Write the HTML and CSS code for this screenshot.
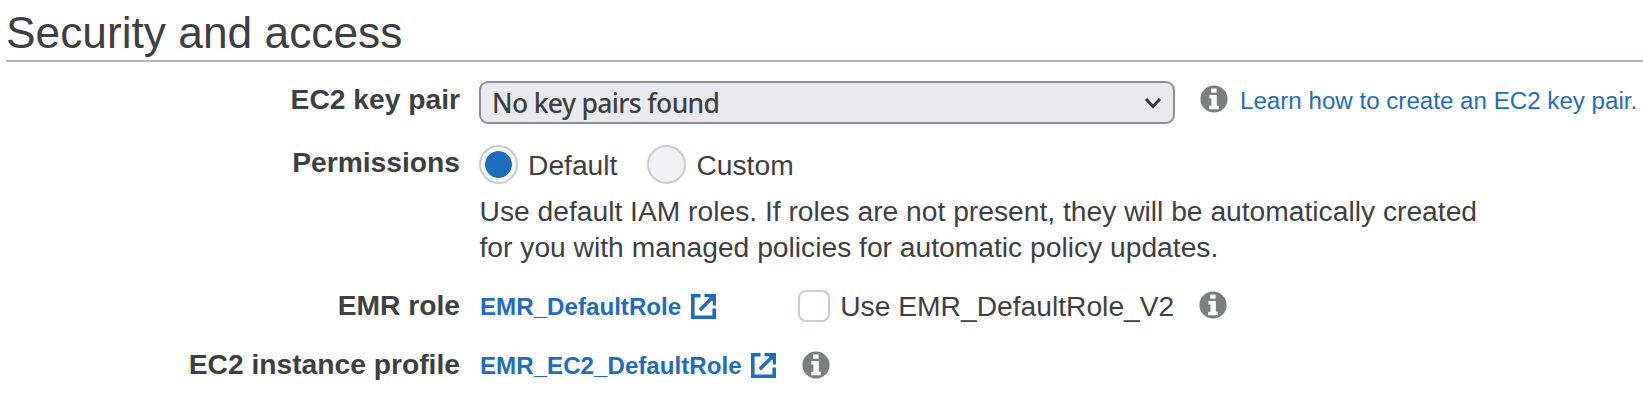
FILE: index.html
```html
<!DOCTYPE html>
<html lang="en">
<head>
<meta charset="utf-8">
<title>Security and access</title>
<link rel="stylesheet" href="styles.css">
</head>
<body>
<svg class="defs" aria-hidden="true">
  <symbol id="info" viewBox="0 0 28 28">
    <circle cx="14" cy="14" r="13.6" fill="#7c7d80"/>
    <path fill="#fff" d="M11.2 3.4h5.4v4.4h-5.4zM9.4 10h7.4v10.8h2v3.4H9.2v-3.4h2.2v-7.4h-2z"/>
  </symbol>
  <symbol id="external" viewBox="0 0 25 25">
    <path fill="none" stroke="#1f6cbf" stroke-width="3.6" d="M9.5 1.8H1.8v21.4h21.4V14.5"/>
    <path fill="none" stroke="#1f6cbf" stroke-width="3.4" d="M8.8 16.2 21 4"/>
    <path fill="#1f6cbf" d="M13.5 0H25v11.5h-3.2V7.2L17.8 3.2h-4.3z"/>
  </symbol>
</svg>
<main class="panel">
  <h1 class="title">Security and access</h1>
  <div class="row row-key">
    <span class="label">EC2 key pair</span>
    <div class="select"><span class="select-text">No key pairs found</span>
      <svg class="chevron" viewBox="0 0 18 12"><path d="M2 2l7 7.5L16 2"/></svg>
    </div>
    <svg class="info info-key"><use href="#info"/></svg>
    <a class="link learn">Learn how to create an EC2 key pair.</a>
  </div>
  <div class="row row-permissions">
    <span class="label">Permissions</span>
    <span class="radio checked"></span><span class="option">Default</span>
    <span class="radio second"></span><span class="option">Custom</span>
  </div>
  <p class="help">Use default IAM roles. If roles are not present, they will be automatically created<br>for you with managed policies for automatic policy updates.</p>
  <div class="row row-role">
    <span class="label">EMR role</span>
    <a class="link role">EMR_DefaultRole</a>
    <svg class="external"><use href="#external"/></svg>
    <span class="checkbox"></span>
    <span class="option use-v2">Use EMR_DefaultRole_V2</span>
    <svg class="info info-role"><use href="#info"/></svg>
  </div>
  <div class="row row-profile">
    <span class="label">EC2 instance profile</span>
    <a class="link role">EMR_EC2_DefaultRole</a>
    <svg class="external"><use href="#external"/></svg>
    <svg class="info info-profile"><use href="#info"/></svg>
  </div>
</main>
</body>
</html>
```
FILE: styles.css
```css
* { box-sizing: border-box; }
body {
  margin: 0;
  background: #fff;
  color: #3e3f42;
  font: 28.22px/36px "Liberation Sans", Arial, sans-serif;
  overflow: hidden;
}
.defs { display: block; width: 0; height: 0; }
.panel { height: 401px; }
.title {
  height: 62px;
  margin: 0 0 0 6px;
  padding-top: 8px;
  border-bottom: 2px solid #b0b5c0;
  font-size: 44.3px;
  line-height: 50px;
  font-weight: 400;
}
.row { display: flex; align-items: flex-start; white-space: nowrap; }
.label { width: 460px; margin-right: 19px; flex: none; text-align: right; font-weight: 700; }
.info { width: 28px; height: 28px; flex: none; }
.external { width: 25px; height: 25px; flex: none; margin-left: 10px; }
.link { color: #1f6cbf; font-size: 24.15px; }

.row-key { height: 76px; padding-top: 19px; }
.row-key .label { margin-top: 0; }
.select {
  display: flex;
  align-items: center;
  width: 696px;
  height: 43px;
  padding: 0 11px;
  background: #e9e9ee;
  border: 2px solid #8d8f98;
  border-radius: 9px;
  flex: none;
}
.select-text {
  font-family: "Noto Sans", sans-serif;
  font-size: 26.5px;
  font-weight: 500;
  letter-spacing: -0.65px;
  flex: 1;
}
.chevron { width: 18px; height: 12px; }
.chevron path { fill: none; stroke: #36383c; stroke-width: 3; }
.info-key { margin: 4px 0 0 25px; }
.learn { margin: 2px 0 0 12px; }

.row-permissions { height: 55px; padding-top: 7px; }
.row-permissions .label { margin-top: -1px; }
.radio {
  width: 39px;
  height: 39px;
  border: 2px solid #c7ccd6;
  border-radius: 50%;
  background: #f2f2f4;
  flex: none;
}
.checked { background: radial-gradient(circle, #1f6cbf 13px, #f5f6f8 13.7px); }
.row-permissions .option { margin: 2px 0 0 10px; }
.second { margin-left: 30px; }

.help { margin: 0 0 0 479.5px; height: 85px; }

.row-role { height: 70px; padding-top: 11px; }
.row-role .label { margin-top: -2px; }
.role { font-weight: 700; margin-left: 1px; }
.row-role .external { margin-top: 5px; }
.checkbox {
  width: 32px;
  height: 32px;
  margin: 1px 0 0 82px;
  border: 2px solid #c7ccd6;
  border-radius: 8px;
  flex: none;
}
.use-v2 { margin: -1px 0 0 10px; }
.info-role { margin: 2px 0 0 25px; }
.row-profile .label { margin-top: -2px; }
.row-profile .external { margin: 5px 0 0 9px; }
.info-profile { margin: 3px 0 0 26px; }
```
